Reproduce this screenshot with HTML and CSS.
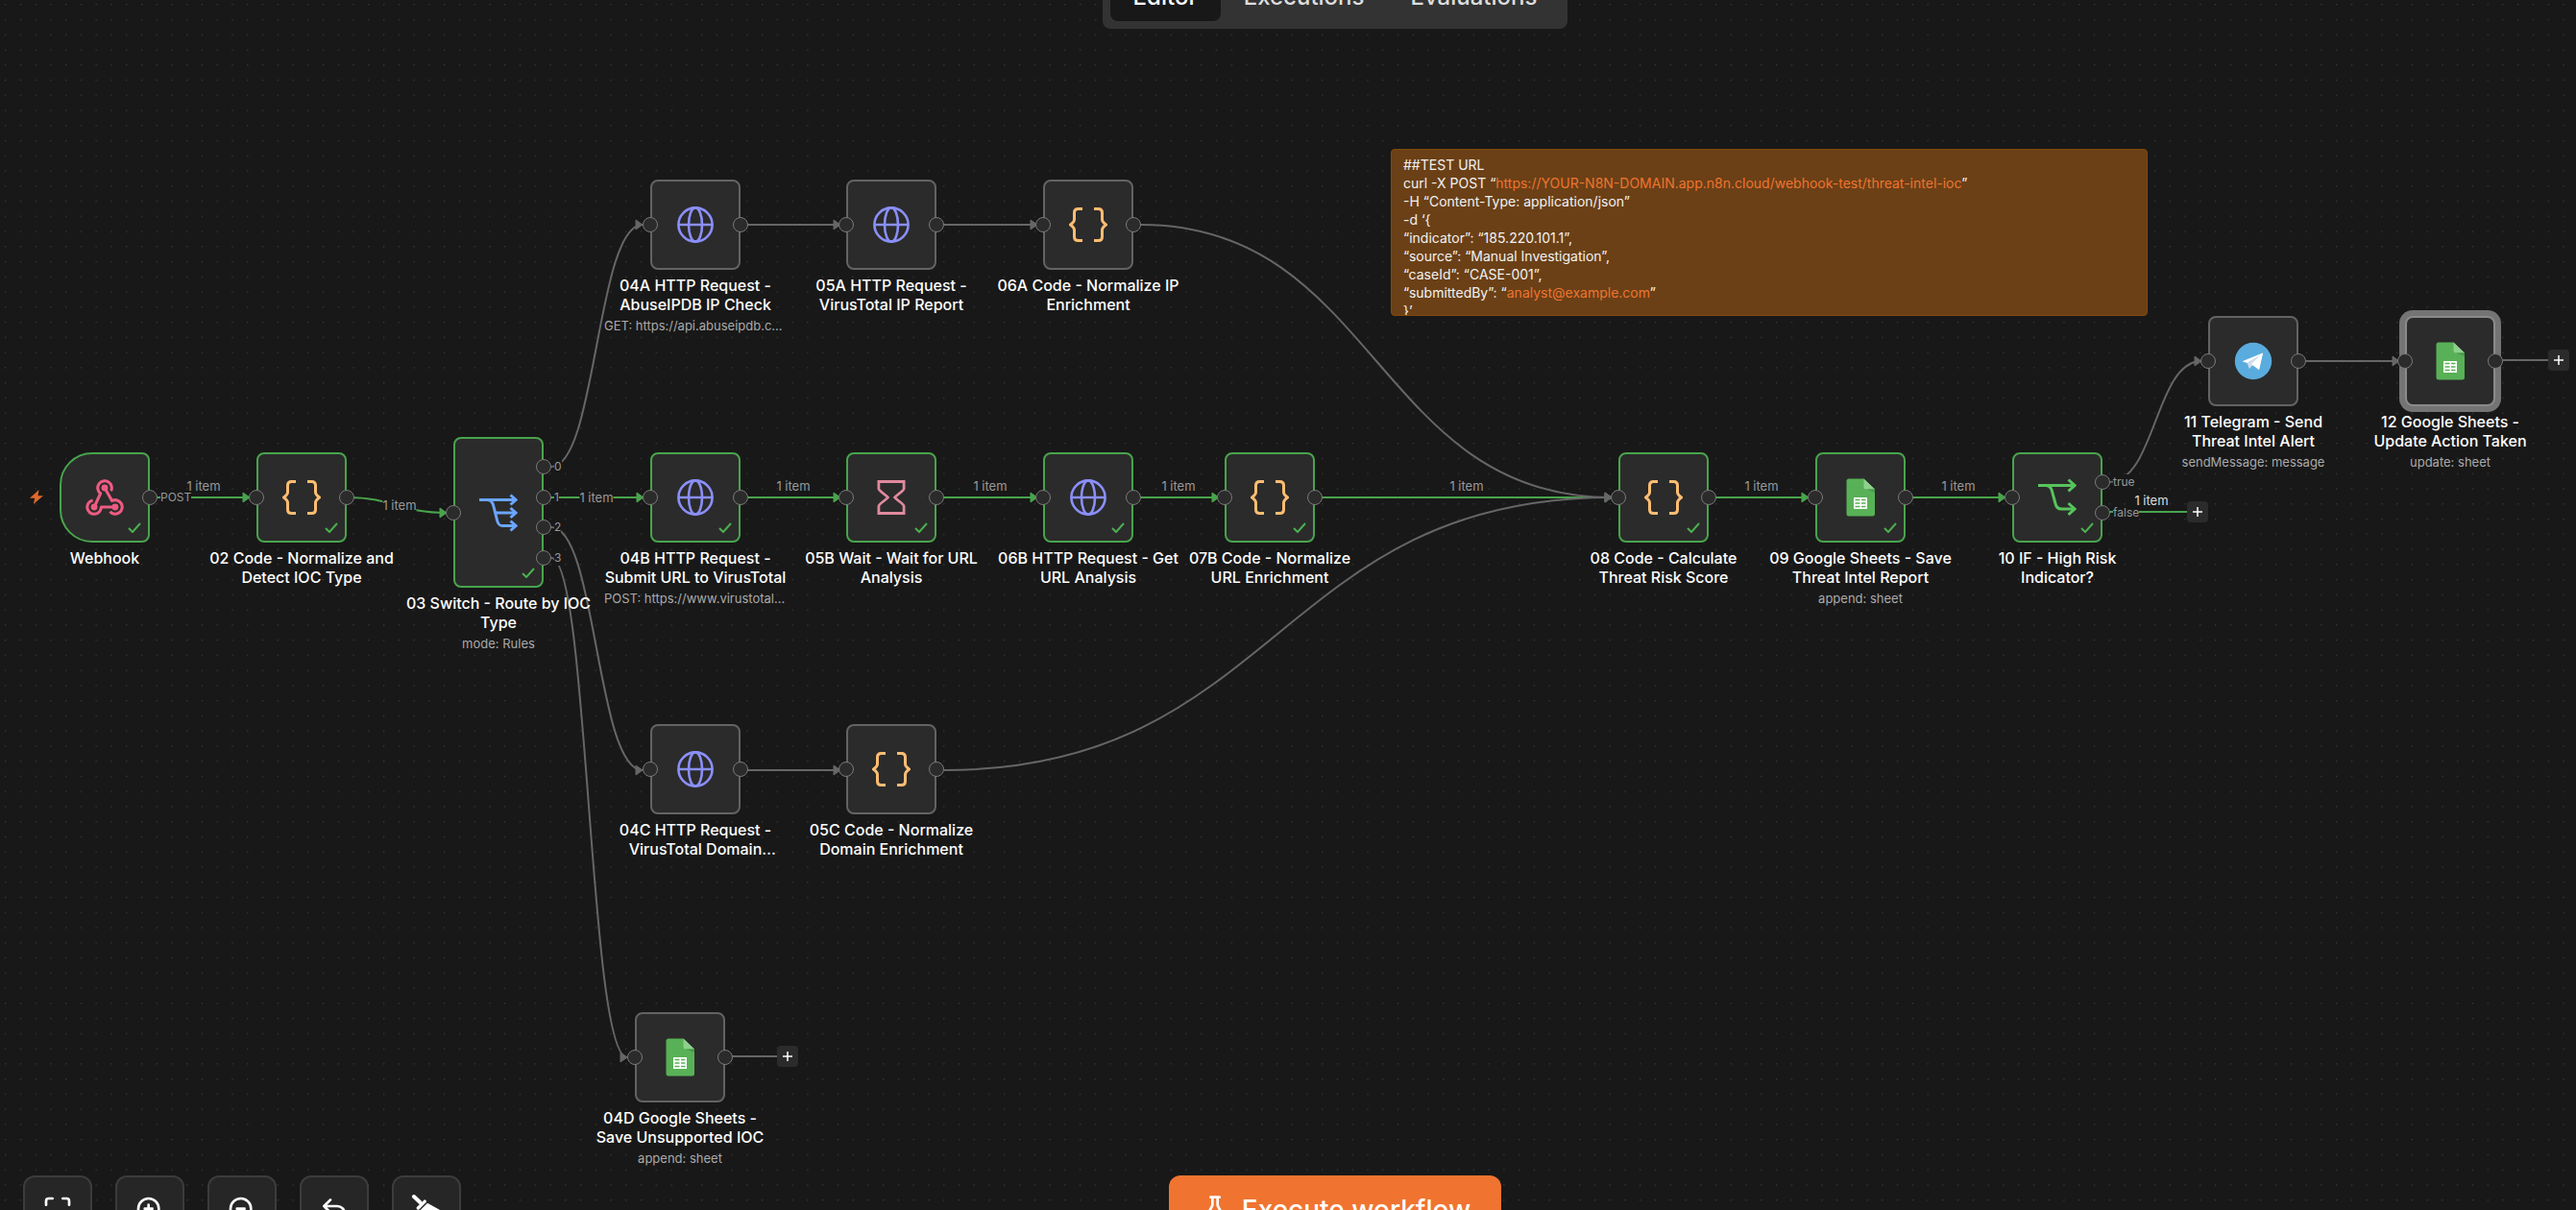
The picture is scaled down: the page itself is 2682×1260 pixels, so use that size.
FILE: index.html
```html
<!DOCTYPE html>
<html lang="en">
<head>
  <meta charset="UTF-8" />
  <meta name="viewport" content="width=device-width, initial-scale=1.0" />
  <title>Threat Intel Workflow</title>
  <link rel="stylesheet" href="styles.css">
</head>
<body>
  <!-- icons shared by the nodes -->
  <svg class="sprite" aria-hidden="true">
    <symbol id="i-webhook" viewBox="1 1 22 21">
      <g fill="none" stroke="#ee5b82" stroke-width="1.7" stroke-linejoin="round">
        <path d="M18 17H10A4 4 0 1 1 5.200 13.100"/>
        <path d="M6 17 9.600 9.200A4 4 0 1 1 15.600 7.800"/>
        <path d="M12 6 16.200 13.400A4 4 0 1 1 15 19.600"/>
      </g>
      <g fill="#ee5b82"><circle cx="6" cy="17" r="1.9"/><circle cx="12" cy="6" r="1.9"/><circle cx="18" cy="17" r="1.9"/></g>
    </symbol>
    <symbol id="i-code" viewBox="0 0 40 40">
      <g fill="none" stroke="#fcbd72" stroke-width="3">
        <path d="M14 3.5H9.500Q5.500 3.500 5.500 7.500V14.500Q5.500 17 1.500 20Q5.500 23 5.500 25.500V32.500Q5.500 36.500 9.500 36.500H14"/>
        <path d="M26 3.500H30.500Q34.500 3.500 34.500 7.500V14.500Q34.500 17 38.500 20Q34.500 23 34.500 25.500V32.500Q34.500 36.500 30.500 36.500H26"/>
      </g>
    </symbol>
    <symbol id="i-globe" viewBox="0 0 40 40">
      <g fill="none" stroke="#8a8ff8" stroke-width="2.600">
        <circle cx="20" cy="20" r="17.600"/>
        <ellipse cx="20" cy="20" rx="7" ry="17.600"/>
        <path d="M2 20h36"/>
      </g>
    </symbol>
    <symbol id="i-wait" viewBox="0 0 40 40">
      <path d="M6.900 3.500h26.200v7.500c0 2-7.600 6.500-9.600 9 2 2.500 9.600 7 9.600 9v7.500H6.900V29c0-2 7.600-6.500 9.600-9-2-2.500-9.600-7-9.600-9z" fill="none" stroke="#e08a9f" stroke-width="2.800"/>
    </symbol>
    <symbol id="i-switch" viewBox="0 0 40 40">
      <g fill="none" stroke="#6ba6ff" stroke-width="3">
        <path d="M0 6.500h38"/>
        <path d="M8 6.500c4.500 0 6 2.500 7 7l3.500 14c1 4.500 2.500 6 6 6H38"/>
        <path d="M16.500 20H38"/>
        <path d="M32.500 1.500l5.500 5-5.500 5M32.500 15l5.500 5-5.500 5M32.500 28.500l5.500 5-5.500 5"/>
      </g>
    </symbol>
    <symbol id="i-if" viewBox="0 0 40 40">
      <g fill="none" stroke="#57c45c" stroke-width="3">
        <path d="M0 7.500h38"/>
        <path d="M8 7.500c4 0 5.500 2 6.500 6l3.500 13c1 4 2.500 5.500 6 5.500h14"/>
        <path d="M31.500 1.500l6.500 6-6.500 6M31.500 26l6.500 6-6.500 6"/>
      </g>
    </symbol>
    <symbol id="i-sheets" viewBox="0 0 40 40">
      <path d="M8 .5h15.500L35 11.500V37a2.500 2.500 0 0 1-2.500 2.500H8A2.500 2.500 0 0 1 5.500 37V3A2.500 2.500 0 0 1 8 .5z" fill="#58b156"/>
      <path d="M23.500.5 35 11.500h-9a2.500 2.500 0 0 1-2.500-2.500z" fill="#8fd08d"/>
      <path d="M26 11.500h9v3.500z" fill="#47984a"/>
      <path d="M13 20h14v12H13z" fill="#fff"/>
      <path d="M14.500 22.500h5M21 22.500h4.500M14.500 26h5M21 26h4.500M14.500 29.500h5M21 29.500h4.500" stroke="#58b156" stroke-width="1.500"/>
    </symbol>
    <symbol id="i-telegram" viewBox="0 0 40 40">
      <circle cx="20" cy="20" r="19.200" fill="#5aacde"/>
      <path d="M8.500 20.200 30 11.500 26 29l-6.500-4.800z" fill="#fff"/>
      <path d="M13.500 21.500 15.800 28l3.700-3.800L28 13.500z" fill="#cfdcea"/>
      <path d="M18 23 30 11.500 26 29z" fill="#fff"/>
    </symbol>
    <symbol id="i-check" viewBox="0 0 14 11">
      <path d="M1 6l4 4 8-9" fill="none" stroke="#4caf50" stroke-width="2"/>
    </symbol>
    <symbol id="i-plus" viewBox="0 0 10 10">
      <path d="M5 0v10M0 5h10" stroke="#fff" stroke-width="1.500"/>
    </symbol>
  </svg>

  <main class="canvas">
    <svg class="edges" aria-hidden="true">
      <defs>
        <pattern id="dots" width="16" height="16" patternUnits="userSpaceOnUse" patternTransform="translate(5 4) scale(.985)">
          <circle cx=".6" cy=".6" r=".8" fill="#3a3a3a"/>
        </pattern>
        <marker id="arrow" viewBox="0 0 9 12" refX="8" refY="6" markerWidth="9" markerHeight="12" markerUnits="userSpaceOnUse">
          <path d="M1 1 8 6 1 11z" fill="#666" stroke="#666" stroke-linejoin="round"/>
        </marker>
        <marker id="arrow-ok" viewBox="0 0 9 12" refX="8" refY="6" markerWidth="9" markerHeight="12" markerUnits="userSpaceOnUse">
          <path d="M1 1 8 6 1 11z" fill="#48a44c" stroke="#48a44c" stroke-linejoin="round"/>
        </marker>
      </defs>
      <rect width="100%" height="100%" fill="url(#dots)"/>

      <g class="edge-ok">
        <path d="M156 518H260"/>
        <path d="M361 518C410 518 416 534 465 534"/>
        <path d="M566 518H670"/>
        <path d="M771 518H875"/>
        <path d="M976 518H1080"/>
        <path d="M1181 518H1269"/>
        <path d="M1370 518H1678"/>
        <path d="M1780 518H1883"/>
        <path d="M1985 518H2088"/>
      </g>
      <g class="edge">
        <path d="M574 486C621 486 621 234 669 234"/>
        <path d="M574 549C621 549 621 802 669 802"/>
        <path d="M574 581C613 581 613 1101 653 1101"/>
        <path d="M771 234H875"/>
        <path d="M976 234H1080"/>
        <path d="M1188 234C1433 234 1433 518 1678 518"/>
        <path d="M771 802H875"/>
        <path d="M983 802C1330 802 1330 518 1678 518"/>
        <path d="M2196 502C2244 502 2244 376 2292 376"/>
        <path d="M2394 376H2498"/>
      </g>
      <g class="edge-open">
        <path class="open-ok" d="M2196 533H2278"/>
        <path d="M2606 375H2654"/>
        <path d="M762 1100H810"/>
      </g>
    </svg>

    <section class="sticky">
      <p>##TEST URL<br>
        curl -X POST “<a href="#">https://YOUR-N8N-DOMAIN.app.n8n.cloud/webhook-test/threat-intel-ioc</a>”<br>
        -H “Content-Type: application/json”<br>
        -d ‘{<br>
        “indicator”: “185.220.101.1”,<br>
        “source”: “Manual Investigation”,<br>
        “caseId”: “CASE-001”,<br>
        “submittedBy”: “<a href="#">analyst@example.com</a>”<br>
        }’</p>
    </section>

    <svg class="trigger" viewBox="0 0 14 15" aria-hidden="true"><path d="M9.500 0 0 8.800h5.200L3.800 15 14 6.200H8.500z" fill="#e0692c"/></svg>

    <!-- main row -->
    <div class="node ok n-webhook">
      <div class="box start">
        <svg class="icon"><use href="#i-webhook"/></svg><svg class="check"><use href="#i-check"/></svg>
        <span class="port out"><span class="tag">POST</span></span>
      </div>
      <h3>Webhook</h3>
    </div>
    <div class="node ok n-02">
      <div class="box">
        <svg class="icon"><use href="#i-code"/></svg><svg class="check"><use href="#i-check"/></svg>
        <span class="port in"></span><span class="port out"></span>
      </div>
      <h3>02 Code - Normalize and Detect IOC Type</h3>
    </div>
    <div class="node ok n-03">
      <div class="box tall">
        <svg class="icon"><use href="#i-switch"/></svg><svg class="check"><use href="#i-check"/></svg>
        <span class="port in"></span>
        <span class="port out p20"><span class="tag">0</span></span>
        <span class="port out p40"><span class="tag">1</span></span>
        <span class="port out p60"><span class="tag">2</span></span>
        <span class="port out p80"><span class="tag">3</span></span>
      </div>
      <h3>03 Switch - Route by IOC Type</h3>
      <p>mode: Rules</p>
    </div>
    <div class="node ok n-04b">
      <div class="box">
        <svg class="icon"><use href="#i-globe"/></svg><svg class="check"><use href="#i-check"/></svg>
        <span class="port in"></span><span class="port out"></span>
      </div>
      <h3>04B HTTP Request - Submit URL to VirusTotal</h3>
      <p>POST: https://www.virustotal.com/api/v3/urls</p>
    </div>
    <div class="node ok n-05b">
      <div class="box">
        <svg class="icon"><use href="#i-wait"/></svg><svg class="check"><use href="#i-check"/></svg>
        <span class="port in"></span><span class="port out"></span>
      </div>
      <h3>05B Wait - Wait for URL Analysis</h3>
    </div>
    <div class="node ok n-06b">
      <div class="box">
        <svg class="icon"><use href="#i-globe"/></svg><svg class="check"><use href="#i-check"/></svg>
        <span class="port in"></span><span class="port out"></span>
      </div>
      <h3>06B HTTP Request - Get URL Analysis</h3>
    </div>
    <div class="node ok n-07b">
      <div class="box">
        <svg class="icon"><use href="#i-code"/></svg><svg class="check"><use href="#i-check"/></svg>
        <span class="port in"></span><span class="port out"></span>
      </div>
      <h3>07B Code - Normalize URL Enrichment</h3>
    </div>
    <div class="node ok n-08">
      <div class="box">
        <svg class="icon"><use href="#i-code"/></svg><svg class="check"><use href="#i-check"/></svg>
        <span class="port in"></span><span class="port out"></span>
      </div>
      <h3>08 Code - Calculate Threat Risk Score</h3>
    </div>
    <div class="node ok n-09">
      <div class="box">
        <svg class="icon"><use href="#i-sheets"/></svg><svg class="check"><use href="#i-check"/></svg>
        <span class="port in"></span><span class="port out"></span>
      </div>
      <h3>09 Google Sheets - Save Threat Intel Report</h3>
      <p>append: sheet</p>
    </div>
    <div class="node ok n-10">
      <div class="box">
        <svg class="icon"><use href="#i-if"/></svg><svg class="check"><use href="#i-check"/></svg>
        <span class="port in"></span>
        <span class="port out p33"><span class="tag">true</span></span>
        <span class="port out p67"><span class="tag">false</span></span>
      </div>
      <h3>10 IF - High Risk Indicator?</h3>
    </div>

    <!-- IP branch -->
    <div class="node n-04a">
      <div class="box">
        <svg class="icon"><use href="#i-globe"/></svg>
        <span class="port in"></span><span class="port out"></span>
      </div>
      <h3>04A HTTP Request - AbuseIPDB IP Check</h3>
      <p>GET: https://api.abuseipdb.com/api/v2/check</p>
    </div>
    <div class="node n-05a">
      <div class="box">
        <svg class="icon"><use href="#i-globe"/></svg>
        <span class="port in"></span><span class="port out"></span>
      </div>
      <h3>05A HTTP Request - VirusTotal IP Report</h3>
    </div>
    <div class="node n-06a">
      <div class="box">
        <svg class="icon"><use href="#i-code"/></svg>
        <span class="port in"></span><span class="port out"></span>
      </div>
      <h3>06A Code - Normalize IP Enrichment</h3>
    </div>

    <!-- domain branch -->
    <div class="node n-04c">
      <div class="box">
        <svg class="icon"><use href="#i-globe"/></svg>
        <span class="port in"></span><span class="port out"></span>
      </div>
      <h3>04C HTTP Request - VirusTotal Domain Enrichment</h3>
    </div>
    <div class="node n-05c">
      <div class="box">
        <svg class="icon"><use href="#i-code"/></svg>
        <span class="port in"></span><span class="port out"></span>
      </div>
      <h3>05C Code - Normalize Domain Enrichment</h3>
    </div>

    <!-- unsupported -->
    <div class="node n-04d">
      <div class="box">
        <svg class="icon"><use href="#i-sheets"/></svg>
        <span class="port in"></span><span class="port out"></span>
      </div>
      <h3>04D Google Sheets - Save Unsupported IOC</h3>
      <p>append: sheet</p>
    </div>

    <!-- alerting -->
    <div class="node n-11">
      <div class="box">
        <svg class="icon"><use href="#i-telegram"/></svg>
        <span class="port in"></span><span class="port out"></span>
      </div>
      <h3>11 Telegram - Send Threat Intel Alert</h3>
      <p>sendMessage: message</p>
    </div>
    <div class="node n-12">
      <div class="box selected">
        <svg class="icon"><use href="#i-sheets"/></svg>
        <span class="port in"></span><span class="port out"></span>
      </div>
      <h3>12 Google Sheets - Update Action Taken</h3>
      <p>update: sheet</p>
    </div>

    <span class="items e-webhook">1 item</span>
    <span class="items on-line e-02">1 item</span>
    <span class="items on-line e-03">1 item</span>
    <span class="items e-04b">1 item</span>
    <span class="items e-05b">1 item</span>
    <span class="items e-06b">1 item</span>
    <span class="items e-07b">1 item</span>
    <span class="items e-08">1 item</span>
    <span class="items e-09">1 item</span>
    <span class="items e-10 bright">1 item</span>

    <button class="add a-10" aria-label="Add node after 10"><svg><use href="#i-plus"/></svg></button>
    <button class="add a-12" aria-label="Add node after 12"><svg><use href="#i-plus"/></svg></button>
    <button class="add a-04d" aria-label="Add node after 04D"><svg><use href="#i-plus"/></svg></button>
  </main>

  <header class="topbar">
    <nav class="tabs">
      <button class="tab active">Editor</button>
      <button class="tab">Executions</button>
      <button class="tab">Evaluations</button>
    </nav>
  </header>

  <div class="controls">
    <button aria-label="Fit view"><svg viewBox="0 0 24 24"><path d="M8 3H5a2 2 0 0 0-2 2v3M21 8V5a2 2 0 0 0-2-2h-3M3 16v3a2 2 0 0 0 2 2h3M16 21h3a2 2 0 0 0 2-2v-3"/></svg></button>
    <button aria-label="Zoom in"><svg viewBox="0 0 24 24"><circle cx="11" cy="11" r="8"/><path d="m21 21-4.350-4.350M11 8v6M8 11h6"/></svg></button>
    <button aria-label="Zoom out"><svg viewBox="0 0 24 24"><circle cx="11" cy="11" r="8"/><path d="m21 21-4.350-4.350M8 11h6"/></svg></button>
    <button aria-label="Undo"><svg viewBox="0 0 24 24"><path d="M9 14 4 9l5-5M4 9h10.500a5.500 5.500 0 0 1 0 11H11"/></svg></button>
    <button aria-label="Tidy up"><svg viewBox="0 0 24 24"><path d="M2.200 1.500 7 6" stroke-width="3"/><path d="M5.500 10.500 10.700 5.300" stroke-width="2.500"/><path d="M7.500 12.500 12.800 7.200l9.200 5-9 9z" fill="currentColor" stroke-width="1"/></svg></button>
  </div>

  <footer class="runbar">
    <button class="run">
      <svg viewBox="0 0 24 24"><path d="M14 2v6a2 2 0 0 0 .245.960l5.510 10.080A2 2 0 0 1 18 22H6a2 2 0 0 1-1.755-2.960l5.510-10.080A2 2 0 0 0 10 8V2M8.500 2h7M6.500 15h11"/></svg>
      Execute workflow
    </button>
  </footer>
</body>
</html>
```
FILE: styles.css
```css
* {
  box-sizing: border-box;
}

body {
  margin: 0;
  height: 100vh;
  overflow: hidden;
  position: relative;
  background-color: #181818;
  color: #fff;
  font-family: Inter, sans-serif;
}

button {
  font-family: inherit;
  color: inherit;
  border: none;
  padding: 0;
  cursor: pointer;
}

.sprite {
  position: absolute;
  width: 0;
  height: 0;
}

.canvas {
  position: relative;
  width: 100%;
  height: 100%;
  overflow: hidden;
}

/* EDGES */
.edges {
  display: block;
  width: 100%;
  height: 100%;
}

.edges g path {
  fill: none;
  stroke-width: 2;
}

.edge path {
  stroke: #666;
  marker-end: url(#arrow);
}

.edge-ok path {
  stroke: #48a44c;
  marker-end: url(#arrow-ok);
}

.edge-open path {
  stroke: #666;
}

.edge-open .open-ok {
  stroke: #48a44c;
}

.items {
  position: absolute;
  transform: translate(-50%, -50%);
  font-size: 13px;
  line-height: 16px;
  color: #999;
  white-space: nowrap;
}

.items.on-line {
  background-color: #181818;
}

.items.bright {
  color: #ddd;
}

.e-webhook { left: 212px; top: 506px; }
.e-02 { left: 416px; top: 526px; }
.e-03 { left: 621px; top: 518px; }
.e-04b { left: 826px; top: 506px; }
.e-05b { left: 1031px; top: 506px; }
.e-06b { left: 1227px; top: 506px; }
.e-07b { left: 1527px; top: 506px; }
.e-08 { left: 1834px; top: 506px; }
.e-09 { left: 2039px; top: 506px; }
.e-10 { left: 2240px; top: 521px; }

/* NODES */
.node {
  position: absolute;
  width: 190px;
  display: flex;
  flex-direction: column;
  align-items: center;
  text-align: center;
}

.n-webhook { left: 14px; top: 471px; }
.n-02 { left: 219px; top: 471px; }
.n-03 { left: 424px; top: 455px; }
.n-04b { left: 629px; top: 471px; }
.n-05b { left: 833px; top: 471px; }
.n-06b { left: 1038px; top: 471px; }
.n-07b { left: 1227px; top: 471px; }
.n-08 { left: 1637px; top: 471px; }
.n-09 { left: 1842px; top: 471px; }
.n-10 { left: 2047px; top: 471px; }
.n-04a { left: 629px; top: 187px; }
.n-05a { left: 833px; top: 187px; }
.n-06a { left: 1038px; top: 187px; }
.n-04c { left: 629px; top: 754px; }
.n-05c { left: 833px; top: 754px; }
.n-04d { left: 613px; top: 1054px; }
.n-11 { left: 2251px; top: 329px; }
.n-12 { left: 2456px; top: 329px; }

.box {
  position: relative;
  width: 94px;
  height: 94px;
  display: flex;
  align-items: center;
  justify-content: center;
  background-color: #2b2b2b;
  border: 2px solid #636363;
  border-radius: 8px;
}

.ok .box {
  border-color: #48a44c;
}

.box.start {
  border-radius: 34px 8px 8px 34px;
}

.box.tall {
  height: 157px;
}

.box.selected {
  border-color: #8a8a8a;
  box-shadow: 0 0 0 6px #747474;
}

.icon {
  width: 40px;
  height: 40px;
}

.check {
  position: absolute;
  right: 7px;
  bottom: 8px;
  width: 14px;
  height: 11px;
}

.port {
  position: absolute;
  top: 50%;
  width: 16px;
  height: 16px;
  margin-top: -8px;
  background-color: #2b2b2b;
  border: 1px solid #7a7a7a;
  border-radius: 50%;
}

.port.in { left: -10px; }
.port.out { right: -10px; }
.p20 { top: 19%; }
.p33 { top: 32%; }
.p40 { top: 40%; }
.p60 { top: 60%; }
.p67 { top: 68%; }
.p80 { top: 81%; }

.tag {
  position: absolute;
  left: 18px;
  top: -1px;
  font-size: 12px;
  line-height: 16px;
  color: #999;
  background-color: #181818;
}

/* a little wider than the node so that long names keep two lines */
.node h3 {
  margin: 6px 0 0;
  width: 194px;
  font-size: 16px;
  font-weight: 500;
  line-height: 20px;
  overflow: hidden;
  display: -webkit-box;
  -webkit-box-orient: vertical;
  -webkit-line-clamp: 2;
}

.node p {
  margin: 3px 0 0;
  width: 100%;
  font-size: 13px;
  line-height: 18px;
  color: #aaa;
  white-space: nowrap;
  overflow: hidden;
  text-overflow: ellipsis;
}

.trigger {
  position: absolute;
  left: 31px;
  top: 510px;
  width: 14px;
  height: 15px;
}

.add {
  position: absolute;
  width: 22px;
  height: 22px;
  display: flex;
  align-items: center;
  justify-content: center;
  background-color: #2b2b2b;
  border-radius: 4px;
}

.add svg {
  width: 10px;
  height: 10px;
}

.a-10 { left: 2277px; top: 522px; }
.a-12 { left: 2653px; top: 364px; }
.a-04d { left: 809px; top: 1089px; }

/* STICKY NOTE */
.sticky {
  position: absolute;
  left: 1448px;
  top: 155px;
  width: 788px;
  height: 174px;
  padding: 6px 12px 0;
  overflow: hidden;
  background-color: #6b4016;
  border: 1px solid #80490f;
  border-radius: 4px;
}

.sticky p {
  margin: 0;
  font-size: 14px;
  line-height: 19px;
  color: #f2f2f2;
}

.sticky a {
  color: #ee7430;
  text-decoration: none;
}

/* TOP TABS */
.topbar {
  position: absolute;
  top: -38px;
  left: 0;
  right: 0;
  padding-left: 98px;
  display: flex;
  justify-content: center;
}

.tabs {
  display: flex;
  padding: 8px;
  background-color: #333;
  border-radius: 8px;
}

.tab {
  height: 52px;
  padding: 0 24px;
  background: none;
  border-radius: 8px;
  font-size: 24px;
  font-weight: 500;
  color: #ddd;
}

.tab.active {
  background-color: #181818;
  color: #fff;
}

/* BOTTOM BAR */
.controls {
  position: absolute;
  left: 24px;
  bottom: -36px;
  display: flex;
  gap: 24px;
}

.controls button {
  width: 72px;
  height: 72px;
  display: flex;
  align-items: center;
  justify-content: center;
  background-color: #262626;
  border: 2px solid #3c3c3c;
  border-radius: 12px;
}

.controls svg,
.run svg {
  width: 32px;
  height: 32px;
  fill: none;
  stroke: currentColor;
  stroke-width: 2;
  stroke-linecap: round;
  stroke-linejoin: round;
}

.runbar {
  position: absolute;
  left: 0;
  right: 0;
  bottom: -36px;
  padding-left: 98px;
  display: flex;
  justify-content: center;
  pointer-events: none;
}

.run {
  height: 72px;
  padding: 0 32px;
  display: flex;
  align-items: center;
  gap: 12px;
  background-color: #f07430;
  border-radius: 12px;
  font-size: 28px;
  font-weight: 500;
  pointer-events: auto;
}
```
